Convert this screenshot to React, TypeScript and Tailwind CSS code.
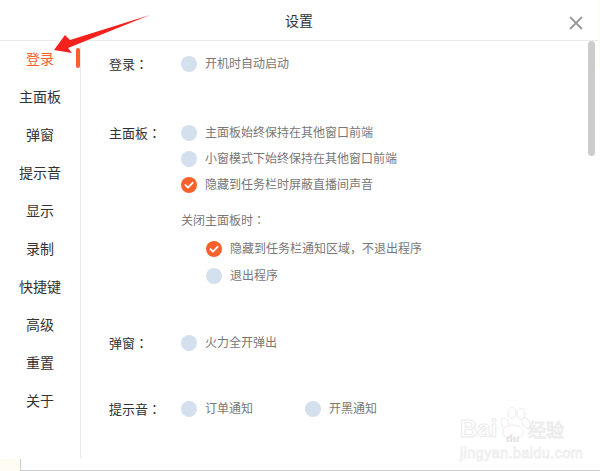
import React from "react";

const FONT = "font-['Liberation_Sans','Noto_Sans_CJK_SC',sans-serif]";

const navItems = ["登录", "主面板", "弹窗", "提示音", "显示", "录制", "快捷键", "高级", "重置", "关于"];

function Colon() {
    return <span className="font-['Noto_Sans_CJK_TC',sans-serif]">：</span>;
}

function Radio({ checked, label }: { checked?: boolean; label: string }) {
    return (
        <div className="flex items-center gap-2 h-4">
            {checked ? (
                <svg width="16" height="16" viewBox="0 0 16 16" className="shrink-0">
                    <circle cx="8" cy="8" r="8" fill="#f9602b" />
                    <path d="M4.4 8.1 L7 10.6 L11.6 5.8" fill="none" stroke="#fff" strokeWidth="1.9" strokeLinecap="round" strokeLinejoin="round" />
                </svg>
            ) : (
                <span className="w-4 h-4 rounded-full bg-[#d5e0ee] shrink-0" />
            )}
            <span className="text-xs text-[#777] whitespace-nowrap">{label}</span>
        </div>
    );
}

function Label({ text }: { text: string }) {
    return (
        <div className="w-[72px] h-4 shrink-0 text-[13px] leading-4 text-[#333]">
            {text}
            <Colon />
        </div>
    );
}

function Watermark() {
    return (
        <div className="absolute left-[459px] top-[406px] w-[110px] h-[54px]">
            <div className="absolute left-px top-[11px] text-[24px] leading-6 font-bold text-white [-webkit-text-stroke:1px_#ececec]">Bai</div>
            <svg width="34" height="34" viewBox="0 0 34 34" className="absolute left-[39px] top-0">
                <g fill="#fff" stroke="#ececec">
                    <ellipse cx="7" cy="17" rx="3.5" ry="5" transform="rotate(-25 7 17)" />
                    <ellipse cx="14" cy="7" rx="4" ry="5.5" />
                    <ellipse cx="23" cy="8" rx="4" ry="5.5" />
                    <ellipse cx="28" cy="17" rx="3.5" ry="5.5" transform="rotate(-25 28 17)" />
                    <ellipse cx="15" cy="26" rx="10.5" ry="7" />
                </g>
            </svg>
            <div className="absolute left-[47px] top-[26px] text-[11px] leading-3 font-bold text-[#e4e4e4]">du</div>
            <div className="absolute left-[69px] top-[15px] text-[18px] leading-5 text-white [-webkit-text-stroke:1px_#ececec]">经验</div>
            <div className="absolute left-px top-[40px] text-[14px] leading-[14px] tracking-[0.6px] whitespace-nowrap text-white [-webkit-text-stroke:1px_#efefef]">jingyan.baidu.com</div>
        </div>
    );
}

export default function App() {
    return (
        <div className={`relative w-[600px] h-[471px] overflow-hidden bg-white ${FONT}`}>
            <div className="h-[41px] relative flex items-center justify-center border-b border-[#ebebeb] w-[598px]">
                <span className="text-sm text-[#333] mt-[2px]">设置</span>
                <svg width="14" height="14" viewBox="0 0 14 14" className="absolute left-[569px] top-4">
                    <path d="M1 1 L13 13 M13 1 L1 13" stroke="#999" strokeWidth="1.8" />
                </svg>
            </div>

            <div className="flex h-[418px]">
                <div className="relative w-[81px] border-r border-[#ebebeb] shrink-0">
                    <div className="-mt-px">
                        {navItems.map((item, i) => (
                            <div
                                key={item}
                                className={`h-[38px] flex items-center justify-center text-sm ${i === 0 ? "text-[#f9602b]" : "text-[#333]"}`}
                            >
                                {item}
                            </div>
                        ))}
                    </div>
                    <span className="absolute left-[76px] top-[7px] w-1 h-5 rounded-full bg-[#f9602b]" />
                </div>

                <div className="relative flex-1 pl-7 pt-[15px]">
                    <div className="flex">
                        <Label text="登录" />
                        <Radio label="开机时自动启动" />
                    </div>

                    <div className="flex mt-[53px]">
                        <Label text="主面板" />
                        <div className="flex flex-col">
                            <div className="flex flex-col gap-[10px]">
                                <Radio label="主面板始终保持在其他窗口前端" />
                                <Radio label="小窗模式下始终保持在其他窗口前端" />
                                <Radio checked label="隐藏到任务栏时屏蔽直播间声音" />
                            </div>
                            <div className="text-xs text-[#777] h-4 leading-4 mt-[19px]">
                                关闭主面板时
                                <Colon />
                            </div>
                            <div className="flex flex-col gap-[11px] pl-[25px] mt-[13px]">
                                <Radio checked label="隐藏到任务栏通知区域，不退出程序" />
                                <Radio label="退出程序" />
                            </div>
                        </div>
                    </div>

                    <div className="flex mt-[51px]">
                        <Label text="弹窗" />
                        <Radio label="火力全开弹出" />
                    </div>

                    <div className="flex mt-[50px]">
                        <Label text="提示音" />
                        <div className="flex gap-[52px]">
                            <Radio label="订单通知" />
                            <Radio label="开黑通知" />
                        </div>
                    </div>

                    <span className="absolute left-[507px] top-0 w-[7px] h-[115px] rounded-full bg-[#cccccc]" />
                </div>
            </div>

            <div className="flex h-3">
                <div className="w-5 bg-[#fffdf3]" />
                <div className="flex-1 border-l border-b border-[#cccccc]" />
            </div>

            {/* pale edge of the window behind */}
            <span className="absolute right-0 top-0 w-[2px] h-[68px] bg-[#fffdf3]" />

            {/* red annotation arrow */}
            <svg width="110" height="50" viewBox="0 0 110 50" className="absolute left-[50px] top-[10px]">
                <path d="M4 40 L15 25 L20 30 L100 5 L18 38 L22 43 Z" fill="#f5211d" />
            </svg>

            <Watermark />
        </div>
    );
}
